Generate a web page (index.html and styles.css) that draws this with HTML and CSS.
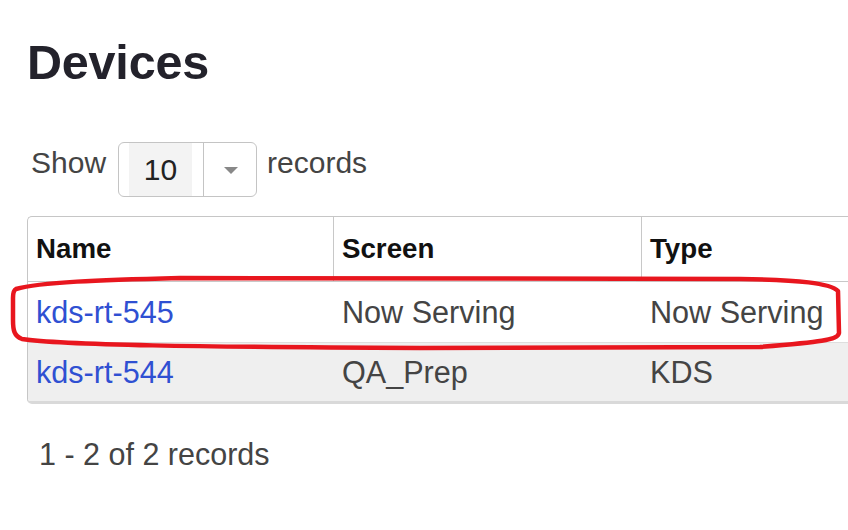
FILE: index.html
```html
<!DOCTYPE html>
<html lang="en">
<head>
<meta charset="utf-8">
<title>Devices</title>
<link rel="stylesheet" href="styles.css">
</head>
<body>
<div class="page">
  <h1 class="title">Devices</h1>
  <div class="toolbar">
    <span class="label">Show</span>
    <div class="select">
      <span class="select-value">10</span>
      <span class="select-arrow"><span class="caret"></span></span>
    </div>
    <span class="label label-after">records</span>
  </div>
  <div class="grid">
    <table class="grid-table">
      <thead>
        <tr class="head-row">
          <th class="col col-name">Name</th>
          <th class="col col-screen">Screen</th>
          <th class="col col-type">Type</th>
        </tr>
      </thead>
      <tbody>
        <tr class="row row-first">
          <td class="cell"><a class="link" href="#">kds-rt-545</a></td>
          <td class="cell">Now Serving</td>
          <td class="cell">Now Serving</td>
        </tr>
        <tr class="row row-alt">
          <td class="cell"><a class="link" href="#">kds-rt-544</a></td>
          <td class="cell">QA_Prep</td>
          <td class="cell">KDS</td>
        </tr>
      </tbody>
    </table>
  </div>
  <div class="pager-info">1 - 2 of 2 records</div>
</div>
<svg class="annotation" width="848" height="530" viewBox="0 0 848 530" aria-hidden="true">
  <path d="M 16 289 C 40 282, 100 280, 180 278 L 740 279 C 800 280, 830 283, 838 291 L 839 333 C 838 340, 820 342, 760 347 L 420 348 C 200 347, 60 345, 22 339 C 14 336, 13 330, 13 320 L 13 298 C 13 292, 14 290, 16 289 Z" fill="none" stroke="#e8161e" stroke-width="4.5" stroke-linejoin="round"/>
</svg>
</body>
</html>
```

FILE: styles.css
```css
html, body {
  margin: 0;
  padding: 0;
  background: #ffffff;
  width: 848px;
  height: 530px;
  overflow: hidden;
  font-family: "Liberation Sans", Arial, sans-serif;
}

.page {
  padding-left: 27px;
}

.title {
  margin: 34px 0 0 0;
  font-size: 48.5px;
  line-height: 56px;
  font-weight: bold;
  color: #23222b;
  letter-spacing: -0.2px;
}

.toolbar {
  display: flex;
  align-items: flex-start;
  margin-top: 52px;
  padding-left: 4px;
}

.label {
  font-size: 30px;
  line-height: 40px;
  margin-top: 1px;
  color: #444444;
}

.label-after {
  margin-left: 10px;
}

.select {
  display: flex;
  margin-left: 12px;
  width: 139px;
  height: 55px;
  box-sizing: border-box;
  border: 1px solid #c4c4c4;
  border-radius: 6px;
  background: #ffffff;
  padding-left: 10px;
}

.select-value {
  width: 63px;
  background: #f3f3f3;
  font-size: 30px;
  line-height: 53px;
  text-align: center;
  color: #222222;
}

.select-arrow {
  display: flex;
  align-items: center;
  justify-content: center;
  margin-left: 11px;
  flex: 1;
  border-left: 1px solid #c4c4c4;
  padding-left: 2px;
}

.caret {
  width: 0;
  height: 0;
  border-left: 7px solid transparent;
  border-right: 7px solid transparent;
  border-top: 7px solid #888888;
  margin-top: 1px;
}

.grid {
  margin-top: 19px;
  width: 1000px;
  border: 1px solid #c6c6c6;
  border-right: none;
  border-bottom: 3px solid #d9d9d9;
  border-radius: 5px 0 0 5px;
  overflow: hidden;
}

.grid-table {
  border-collapse: separate;
  border-spacing: 0;
  table-layout: fixed;
  width: 1000px;
}

.col {
  height: 64px;
  padding: 0 8px;
  box-sizing: content-box;
  text-align: left;
  font-size: 27.7px;
  line-height: 64px;
  font-weight: bold;
  color: #111111;
  border-bottom: 1px solid #c8c8c8;
  border-right: 1px solid #c8c8c8;
}

.col-name {
  width: 289px;
}

.col-screen {
  width: 291px;
}

.col-type {
  width: 369px;
}

.cell {
  padding: 0 8px;
  font-size: 30.6px;
  color: #444444;
  white-space: nowrap;
}

.row-first .cell {
  height: 60px;
  line-height: 60px;
  border-bottom: 1px solid #dedede;
  background: #ffffff;
}

.row-alt .cell {
  height: 58px;
  line-height: 58px;
  background: #efefef;
}

.link {
  color: #2f50d2;
  text-decoration: none;
}

.pager-info {
  margin-top: 30px;
  padding-left: 12px;
  font-size: 30.5px;
  line-height: 40px;
  color: #444444;
}

.annotation {
  position: absolute;
  left: 0;
  top: 0;
  pointer-events: none;
}
```
